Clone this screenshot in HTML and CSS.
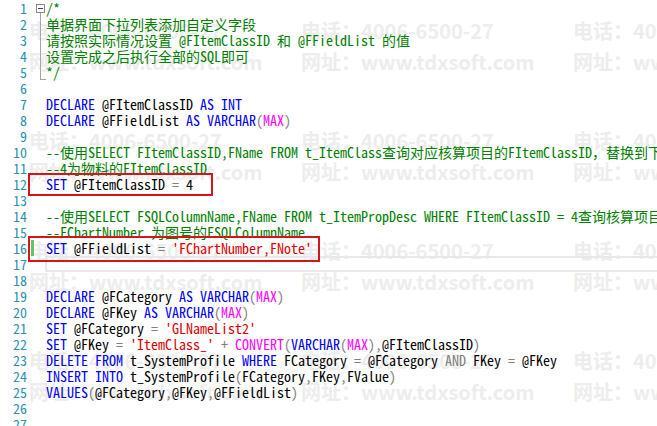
FILE: index.html
```html
<!DOCTYPE html>
<html>
<head>
<meta charset="utf-8">
<link rel="stylesheet" href="styles.css">
</head>
<body>
<div class="wm">
  <div class="wm-cell">电话：4006-6500-27<br>网址：www.tdxsoft.com</div>
  <div class="wm-cell">电话：4006-6500-27<br>网址：www.tdxsoft.com</div>
  <div class="wm-cell">电话：4006-6500-27<br>网址：www.tdxsoft.com</div>
  <div class="wm-cell">电话：4006-6500-27<br>网址：www.tdxsoft.com</div>
  <div class="wm-cell">电话：4006-6500-27<br>网址：www.tdxsoft.com</div>
  <div class="wm-cell">电话：4006-6500-27<br>网址：www.tdxsoft.com</div>
  <div class="wm-cell">电话：4006-6500-27<br>网址：www.tdxsoft.com</div>
  <div class="wm-cell">电话：4006-6500-27<br>网址：www.tdxsoft.com</div>
  <div class="wm-cell">电话：4006-6500-27<br>网址：www.tdxsoft.com</div>
  <div class="wm-cell">电话：4006-6500-27<br>网址：www.tdxsoft.com</div>
  <div class="wm-cell">电话：4006-6500-27<br>网址：www.tdxsoft.com</div>
  <div class="wm-cell">电话：4006-6500-27<br>网址：www.tdxsoft.com</div>
</div>
<div class="curline"></div>
<div class="editor">
  <div class="row"><span class="ln">1</span><span class="gut"><i class="fold"><b></b></i><i class="stem"></i></span><span class="code c">/*</span></div>
  <div class="row"><span class="ln">2</span><span class="gut"><i class="vline"></i></span><span class="code c">单据界面下拉列表添加自定义字段</span></div>
  <div class="row"><span class="ln">3</span><span class="gut"><i class="vline"></i></span><span class="code c">请按照实际情况设置 @FItemClassID 和 @FFieldList 的值</span></div>
  <div class="row"><span class="ln">4</span><span class="gut"><i class="vline"></i></span><span class="code c">设置完成之后执行全部的SQL即可</span></div>
  <div class="row"><span class="ln">5</span><span class="gut"><i class="vend"></i></span><span class="code c">*/</span></div>
  <div class="row"><span class="ln">6</span><span class="gut"></span><span class="code"></span></div>
  <div class="row"><span class="ln">7</span><span class="gut"></span><span class="code"><span class="k">DECLARE</span> @FItemClassID <span class="k">AS</span> <span class="k">INT</span></span></div>
  <div class="row"><span class="ln">8</span><span class="gut"></span><span class="code"><span class="k">DECLARE</span> @FFieldList <span class="k">AS</span> <span class="k">VARCHAR</span><span class="o">(</span><span class="f">MAX</span><span class="o">)</span></span></div>
  <div class="row"><span class="ln">9</span><span class="gut"></span><span class="code"></span></div>
  <div class="row"><span class="ln">10</span><span class="gut"></span><span class="code c">--使用SELECT FItemClassID,FName FROM t_ItemClass查询对应核算项目的FItemClassID，替换到下面的值</span></div>
  <div class="row"><span class="ln">11</span><span class="gut"></span><span class="code c">--4为物料的FItemClassID</span></div>
  <div class="row"><span class="ln">12</span><span class="gut"></span><span class="code"><span class="k">SET</span> @FItemClassID <span class="o">=</span> 4</span></div>
  <div class="row"><span class="ln">13</span><span class="gut"></span><span class="code"></span></div>
  <div class="row"><span class="ln">14</span><span class="gut"></span><span class="code c">--使用SELECT FSQLColumnName,FName FROM t_ItemPropDesc WHERE FItemClassID = 4查询核算项目的字段</span></div>
  <div class="row"><span class="ln">15</span><span class="gut"></span><span class="code c">--FChartNumber 为图号的FSQLColumnName</span></div>
  <div class="row"><span class="ln">16</span><span class="gut"><i class="changed"></i></span><span class="code"><span class="k">SET</span> @FFieldList <span class="o">=</span> <span class="s">'FChartNumber,FNote'</span></span></div>
  <div class="row"><span class="ln">17</span><span class="gut"></span><span class="code"></span></div>
  <div class="row"><span class="ln">18</span><span class="gut"></span><span class="code"></span></div>
  <div class="row"><span class="ln">19</span><span class="gut"></span><span class="code"><span class="k">DECLARE</span> @FCategory <span class="k">AS</span> <span class="k">VARCHAR</span><span class="o">(</span><span class="f">MAX</span><span class="o">)</span></span></div>
  <div class="row"><span class="ln">20</span><span class="gut"></span><span class="code"><span class="k">DECLARE</span> @FKey <span class="k">AS</span> <span class="k">VARCHAR</span><span class="o">(</span><span class="f">MAX</span><span class="o">)</span></span></div>
  <div class="row"><span class="ln">21</span><span class="gut"></span><span class="code"><span class="k">SET</span> @FCategory <span class="o">=</span> <span class="s">'GLNameList2'</span></span></div>
  <div class="row"><span class="ln">22</span><span class="gut"></span><span class="code"><span class="k">SET</span> @FKey <span class="o">=</span> <span class="s">'ItemClass_'</span> <span class="o">+</span> <span class="f">CONVERT</span><span class="o">(</span><span class="k">VARCHAR</span><span class="o">(</span><span class="f">MAX</span><span class="o">),</span>@FItemClassID<span class="o">)</span></span></div>
  <div class="row"><span class="ln">23</span><span class="gut"></span><span class="code"><span class="k">DELETE</span> <span class="k">FROM</span> t_SystemProfile <span class="k">WHERE</span> FCategory <span class="o">=</span> @FCategory <span class="o">AND</span> FKey <span class="o">=</span> @FKey</span></div>
  <div class="row"><span class="ln">24</span><span class="gut"></span><span class="code"><span class="k">INSERT</span> <span class="k">INTO</span> t_SystemProfile<span class="o">(</span>FCategory<span class="o">,</span>FKey<span class="o">,</span>FValue<span class="o">)</span></span></div>
  <div class="row"><span class="ln">25</span><span class="gut"></span><span class="code"><span class="k">VALUES</span><span class="o">(</span>@FCategory<span class="o">,</span>@FKey<span class="o">,</span>@FFieldList<span class="o">)</span></span></div>
  <div class="row"><span class="ln">26</span><span class="gut"></span><span class="code"></span></div>
  <div class="row"><span class="ln">27</span><span class="gut"></span><span class="code"></span></div>
</div>
<div class="mark mark-1"></div>
<div class="mark mark-2"></div>
</body>
</html>
```

FILE: styles.css
```css
html, body {
  margin: 0;
  padding: 0;
}
body {
  width: 657px;
  height: 426px;
  overflow: hidden;
  background: #ffffff;
  position: relative;
}

/* watermark backdrop */
.wm {
  position: absolute;
  left: 29px;
  top: 15px;
  right: 0;
  bottom: 0;
  overflow: hidden;
  display: grid;
  grid-template-columns: repeat(3, 272px);
  grid-auto-rows: 110px;
  font-family: "Noto Sans CJK SC", "Noto Sans", sans-serif;
  font-weight: 700;
  font-size: 20px;
  line-height: 31px;
  color: #ededed;
  white-space: nowrap;
  z-index: 0;
}

/* current line outline (line 17) */
.curline {
  position: absolute;
  left: 45px;
  right: -4px;
  top: 256px;
  height: 16px;
  box-sizing: border-box;
  border: 2px solid #e8e8e8;
  z-index: 0;
}

.editor {
  position: relative;
  z-index: 1;
  height: 426px;
  overflow: hidden;
  font-family: "Noto Sans Mono CJK SC", "Liberation Mono", monospace;
  font-size: 14px;
  line-height: 16px;
  color: #000000;
}
.row {
  display: flex;
  height: 16px;
  white-space: pre;
}
.ln {
  width: 27px;
  flex: none;
  text-align: right;
  color: #2b91af;
}
.gut {
  width: 19px;
  flex: none;
  display: flex;
  flex-direction: column;
}
.code {
  flex: none;
}

.fold {
  display: flex;
  align-items: center;
  justify-content: center;
  margin: 4px 0 0 9px;
  width: 9px;
  height: 9px;
  box-sizing: border-box;
  border: 1px solid #8a8a8a;
  background: #fff;
}
.fold b {
  width: 5px;
  height: 1px;
  background: #444;
}
.stem {
  margin-left: 13px;
  width: 1px;
  flex: 1;
  background: #a5a5a5;
}
.vline {
  margin-left: 13px;
  width: 1px;
  height: 16px;
  background: #a5a5a5;
}
.vend {
  margin-left: 13px;
  width: 5px;
  height: 15px;
  border-left: 1px solid #a5a5a5;
  border-bottom: 1px solid #a5a5a5;
}
.changed {
  margin-left: 4px;
  width: 3px;
  height: 16px;
  background: #62c462;
}

.c { color: #008000; }
.k { color: #0000ff; }
.s { color: #e00000; }
.f { color: #ff00ff; }
.o { color: #808080; }

/* red annotation boxes */
.mark {
  position: absolute;
  box-sizing: border-box;
  border: 2px solid #d4151c;
  z-index: 2;
}
.mark-1 {
  left: 28px;
  top: 173px;
  width: 185px;
  height: 23px;
}
.mark-2 {
  left: 28px;
  top: 236px;
  width: 292px;
  height: 26px;
}
```
